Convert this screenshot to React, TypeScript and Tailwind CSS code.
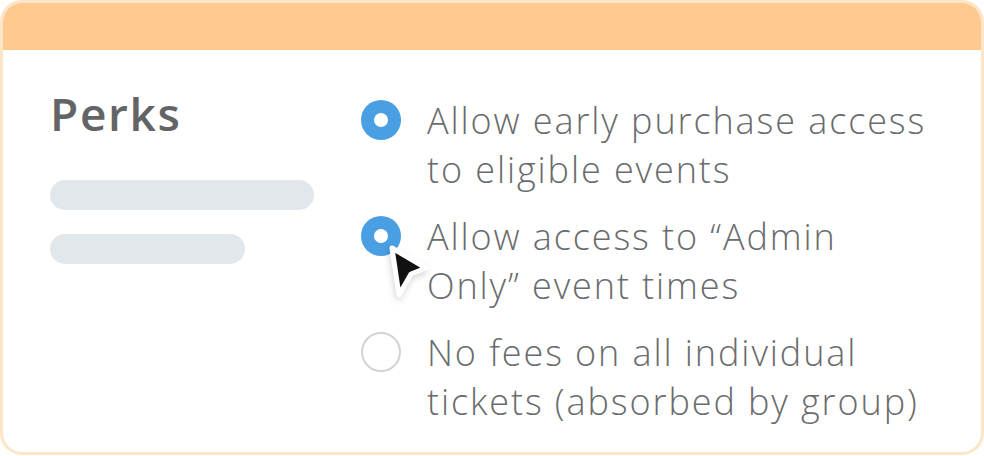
import React from "react";

function Radio({ checked }: { checked: boolean }) {
  return checked ? (
    <div className="w-[40px] h-[40px] rounded-full bg-[#4a9fe3] flex items-center justify-center shrink-0">
      <div className="w-[14px] h-[14px] rounded-full bg-white" />
    </div>
  ) : (
    <div className="w-[40px] h-[40px] rounded-full border-2 border-[#d3d3d3] bg-white shrink-0" />
  );
}

function Item({ checked, lines, cursor }: { checked: boolean; lines: string[]; cursor?: boolean }) {
  return (
    <div className="flex gap-[26px] items-start relative">
      <div className="pt-[4px]">
        <Radio checked={checked} />
      </div>
      <div className="text-[36px] leading-[49px] text-[#6a6b6d] tracking-[1.9px] font-[350] whitespace-nowrap">
        {lines.map((l) => (
          <div key={l}>{l}</div>
        ))}
      </div>
      {cursor && (
        <svg
          className="absolute left-0 top-0 overflow-visible"
          width="80"
          height="100"
          viewBox="0 0 80 100"
          style={{ filter: "drop-shadow(-1px 3px 3px rgba(0,0,0,0.16))" }}
        >
          <path
            d="M31 36 L65 56 L50 62 L38 83 Z"
            fill="#111"
            stroke="#fff"
            strokeWidth="5"
            strokeLinejoin="round"
          />
        </svg>
      )}
    </div>
  );
}

export default function App() {
  return (
    <div
      className="w-[984px] h-[456px] bg-white"
      style={{ fontFamily: '"Open Sans", "Liberation Sans", sans-serif' }}
    >
      <div className="w-[984px] h-[455px] rounded-[22px] border-[3px] border-[#fde5c7] overflow-hidden bg-white flex flex-col">
        <div className="h-[47px] bg-[#fdc98e] shrink-0" />
        <div className="flex flex-1">
          <div className="w-[358px] shrink-0 pl-[47px] pt-[38px]">
            <div className="text-[46px] font-semibold text-[#636466] leading-[50px] tracking-[1.6px]">Perks</div>
            <div className="mt-[42px] w-[264px] h-[30px] rounded-full bg-[#e1e7ea]" />
            <div className="mt-[24px] w-[195px] h-[30px] rounded-full bg-[#e1e7ea]" />
          </div>
          <div className="flex flex-col pt-[46px] gap-[18px]">
            <Item checked lines={["Allow early purchase access", "to eligible events"]} />
            <Item checked cursor lines={["Allow access to \u201cAdmin", "Only\u201d event times"]} />
            <Item checked={false} lines={["No fees on all individual", "tickets (absorbed by group)"]} />
          </div>
        </div>
      </div>
    </div>
  );
}
